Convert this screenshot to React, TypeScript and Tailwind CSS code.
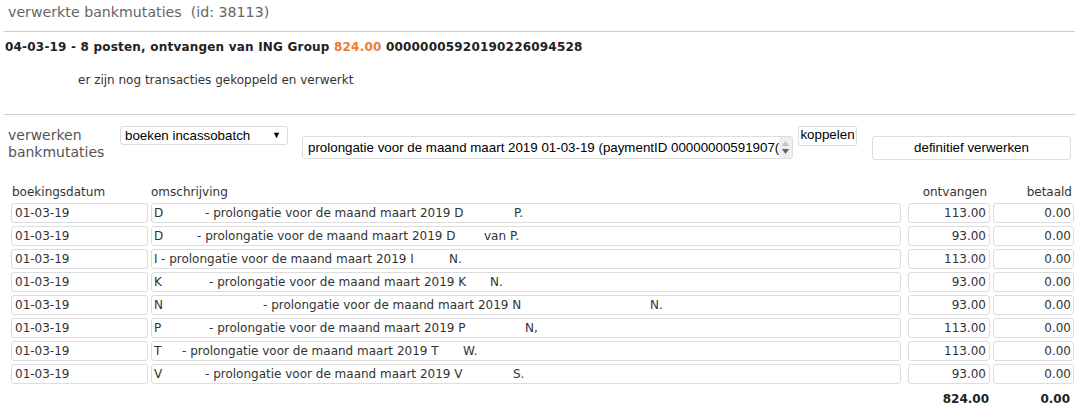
import React from 'react';

type Row = {
  first: string;
  firstW: number;
  middle: string;
  middleW: number;
  last: string;
  in: string;
};

const rows: Row[] = [
  { first: 'D', firstW: 51, middle: '- prolongatie voor de maand maart 2019 D', middleW: 309, last: 'P.', in: '113.00' },
  { first: 'D', firstW: 43, middle: '- prolongatie voor de maand maart 2019 D', middleW: 287, last: 'van P.', in: '93.00' },
  { first: 'I', firstW: 7, middle: '- prolongatie voor de maand maart 2019 I', middleW: 288, last: 'N.', in: '113.00' },
  { first: 'K', firstW: 55, middle: '- prolongatie voor de maand maart 2019 K', middleW: 281, last: 'N.', in: '93.00' },
  { first: 'N', firstW: 109, middle: '- prolongatie voor de maand maart 2019 N', middleW: 387, last: 'N.', in: '93.00' },
  { first: 'P', firstW: 55, middle: '- prolongatie voor de maand maart 2019 P', middleW: 316, last: 'N,', in: '113.00' },
  { first: 'T', firstW: 28, middle: '- prolongatie voor de maand maart 2019 T', middleW: 281, last: 'W.', in: '113.00' },
  { first: 'V', firstW: 51, middle: '- prolongatie voor de maand maart 2019 V', middleW: 308, last: 'S.', in: '93.00' },
];

const box = 'h-[20px] rounded-[3px] border border-[#dddddd] bg-white leading-[18px] overflow-hidden whitespace-nowrap';

export default function App() {
  return (
    <div className="min-h-[415px] w-[1083px] bg-white pl-[4px] pr-[8px] font-['DejaVu_Sans',Verdana,sans-serif] text-[12px] text-[#333]">
      <div className="h-[31px] pl-[4px] pt-[1px] text-[14.2px] leading-[22px] text-[#666]">
        verwerkte bankmutaties&nbsp; (id: 38113)
      </div>
      <div className="border-t border-[#cccccc]" />
      <div className="mt-[7px] pl-[1px] font-bold leading-[16px] tracking-[0.2px] text-[#222]">
        04-03-19 - 8 posten, ontvangen van ING Group <span className="text-[#f07a30]">824.00</span> 00000005920190226094528
      </div>
      <div className="mt-[17px] pl-[74px] leading-[16px]">er zijn nog transacties gekoppeld en verwerkt</div>
      <div className="mt-[26px] border-t border-[#cccccc]" />

      <div className="mt-[11px] flex items-start">
        <div className="w-[116px] pl-[4px] pt-[1px] text-[14px] leading-[17px] text-[#555]">
          verwerken
          <br />
          bankmutaties
        </div>
        <div className="flex h-[19px] w-[168px] items-center justify-between rounded-[3px] border border-[#dddddd] pl-[4px] pr-[6px] font-['Liberation_Sans',Arial,sans-serif] text-[13.33px] text-black">
          <span>boeken incassobatch</span>
          <span className="text-[9px]">▼</span>
        </div>
        <div className="ml-[14px] mt-[10px] flex h-[23px] w-[491px] items-center rounded-[3px] border border-[#dddddd] font-['Liberation_Sans',Arial,sans-serif] text-[13.33px] text-black">
          <span className="flex-1 overflow-hidden whitespace-nowrap pl-[5px]">
            prolongatie voor de maand maart 2019 01-03-19 (paymentID 00000000591907(
          </span>
          <div className="flex h-full w-[13px] flex-col items-center justify-center bg-[#eeeeee]">
            <svg width="7" height="5" viewBox="0 0 7 5"><path d="M0 5 L3.5 0 L7 5 Z" fill="#c4c4c4" /></svg>
            <svg width="7" height="5" viewBox="0 0 7 5" className="mt-[3px]"><path d="M0 0 L3.5 5 L7 0 Z" fill="#606060" /></svg>
          </div>
        </div>
        <div className="ml-[5px] h-[20px] w-[59px] rounded-[2px] border border-[#dddddd] text-center font-['Liberation_Sans',Arial,sans-serif] text-[13.33px] leading-[16px] text-black">
          koppelen
        </div>
        <div className="ml-[15px] mt-[10px] h-[24px] w-[199px] rounded-[3px] border border-[#dddddd] text-center font-['Liberation_Sans',Arial,sans-serif] text-[13.33px] leading-[22px] text-black">
          definitief verwerken
        </div>
      </div>

      <div className="mt-[23px] flex leading-[16px]">
        <div className="w-[146px] pl-[8px]">boekingsdatum</div>
        <div className="w-[750px] pl-[1px]">omschrijving</div>
        <div className="w-[89px] pr-[2px] text-right">ontvangen</div>
        <div className="w-[83px] text-right">betaald</div>
      </div>

      <div className="mt-[3px] flex flex-col gap-[3px] pl-[7px]">
        {rows.map((r, i) => (
          <div key={i} className="flex">
            <div className={`${box} w-[137px] pl-[3px]`}>01-03-19</div>
            <div className={`${box} ml-[3px] w-[750px] pl-[2px]`}>
              <span className="inline-block" style={{ width: r.firstW }}>{r.first}</span>
              <span className="inline-block" style={{ width: r.middleW }}>{r.middle}</span>
              <span>{r.last}</span>
            </div>
            <div className={`${box} ml-[7px] w-[82px] pr-[3px] text-right`}>{r.in}</div>
            <div className={`${box} ml-[3px] w-[81px] pr-[2px] text-right`}>0.00</div>
          </div>
        ))}
      </div>

      <div className="mt-[7px] flex font-bold leading-[16px] text-[#222]">
        <div className="w-[985px] text-right">824.00</div>
        <div className="w-[81px] text-right">0.00</div>
      </div>
    </div>
  );
}
